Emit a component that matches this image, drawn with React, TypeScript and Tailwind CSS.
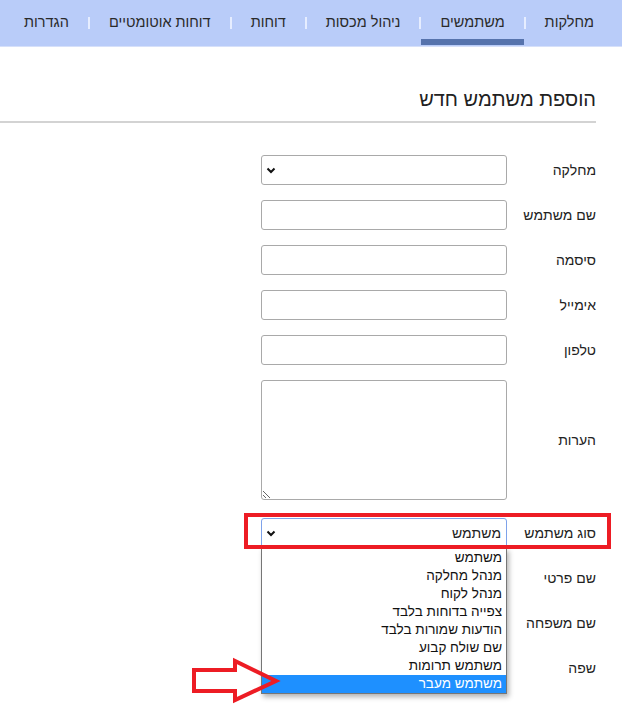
import React from "react";

const tabs = ["מחלקות", "משתמשים", "ניהול מכסות", "דוחות", "דוחות אוטומטיים", "הגדרות"];

const userTypes = [
  "משתמש",
  "מנהל מחלקה",
  "מנהל לקוח",
  "צפייה בדוחות בלבד",
  "הודעות שמורות בלבד",
  "שם שולח קבוע",
  "משתמש תרומות",
  "משתמש מעבר",
];

const Chevron = () => (
  <svg width="10" height="7" viewBox="0 0 10 7" className="shrink-0">
    <path d="M1.5 1.5 L5 5 L8.5 1.5" fill="none" stroke="#111" strokeWidth="2" />
  </svg>
);

const Row: React.FC<{ label: string; children: React.ReactNode; className?: string }> = ({
  label,
  children,
  className = "",
}) => (
  <div className={`flex items-center ${className}`}>
    <label className="w-[89px] shrink-0 text-[14px] text-[#222]">{label}</label>
    {children}
  </div>
);

const inputCls = "w-[246px] h-[30px] border border-[#a9a9a9] rounded-[3px] bg-white";

export default function App() {
  return (
    <div
      dir="rtl"
      className="relative w-[622px] h-[707px] overflow-hidden bg-white text-[#222] font-['Liberation_Sans',Arial,sans-serif]"
    >
      {/* Top nav */}
      <nav className="flex h-[47px] items-stretch bg-[#b9ccf9] border-b border-[#d6e0fa] pr-[9px]">
        {tabs.map((t, i) => (
          <React.Fragment key={t}>
            {i > 0 && <span className="w-[2px] h-[12px] self-center bg-[#e6edff]" />}
            <div className="relative flex items-center px-[19px] text-[14.5px] text-[#2a2a2a]">
              {t}
              {i === 1 && (
                <span className="absolute left-0 right-0 top-[39px] h-[6px] bg-[#5673ad]" />
              )}
            </div>
          </React.Fragment>
        ))}
      </nav>

      {/* Heading */}
      <div className="ml-0 mr-[26px] mt-[40px] border-b-2 border-[#d3d3d3] pb-[10px]">
        <h1 className="text-[20px] leading-[24px] text-[#222]">הוספת משתמש חדש</h1>
      </div>

      {/* Form */}
      <div className="mt-[32px] mr-[26px] flex flex-col gap-[15px]">
        <Row label="מחלקה">
          <div className={`${inputCls} flex items-center justify-end pl-[4px]`}>
            <Chevron />
          </div>
        </Row>
        <Row label="שם משתמש">
          <input className={inputCls} />
        </Row>
        <Row label="סיסמה">
          <input className={inputCls} type="password" />
        </Row>
        <Row label="אימייל">
          <input className={inputCls} />
        </Row>
        <Row label="טלפון">
          <input className={inputCls} />
        </Row>
        <Row label="הערות">
          <textarea className="block w-[246px] h-[120px] border border-[#a9a9a9] rounded-[3px] bg-white" />
        </Row>
        <Row label="סוג משתמש" className="mt-[3px]">
          <div className="w-[246px] h-[30px] border border-[#7ea2ea] rounded-t-[3px] bg-white flex items-center justify-between pr-[5px] pl-[4px] text-[14px]">
            <span>משתמש</span>
            <Chevron />
          </div>
        </Row>
        <Row label="שם פרטי">
          <input className={inputCls} />
        </Row>
        <Row label="שם משפחה">
          <input className={inputCls} />
        </Row>
        <Row label="שפה">
          <input className={inputCls} />
        </Row>
      </div>

      {/* Open dropdown list */}
      <ul className="absolute left-[261px] top-[548px] w-[246px] border border-[#767676] bg-white shadow-[2px_3px_5px_rgba(0,0,0,0.3)] text-[13.5px]">
        {userTypes.map((u, i) => (
          <li
            key={u}
            className={`h-[18px] leading-[18px] pr-[4px] ${
              i === userTypes.length - 1 ? "bg-[#1e90ff] text-white" : "text-[#111]"
            }`}
          >
            {u}
          </li>
        ))}
      </ul>

      {/* Red highlight box */}
      <div className="absolute left-[244px] top-[513px] w-[367px] h-[36px] border-[4px] border-[#ed1c24]" />

      {/* Red arrow */}
      <svg className="absolute left-0 top-0" width="622" height="707" viewBox="0 0 622 707">
        <polygon
          points="194,670 235,670 235,661 276,681 235,700 235,691 194,691"
          fill="none"
          stroke="#ed1c24"
          strokeWidth="4"
          strokeLinejoin="miter"
        />
      </svg>
    </div>
  );
}
